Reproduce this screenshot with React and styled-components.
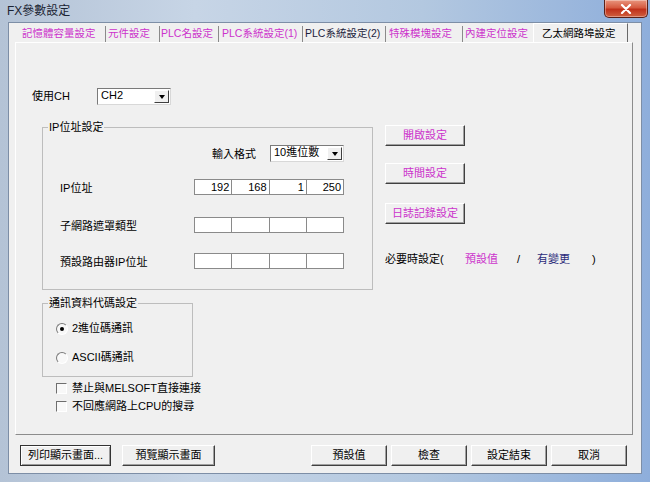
import styled, { createGlobalStyle } from "styled-components"

const GlobalStyle = createGlobalStyle`
  * { box-sizing: border-box; }
  html, body { margin: 0; padding: 0; background: #ffffff; }
  body {
    font-family: "Liberation Sans", "Noto Sans CJK TC", sans-serif;
    font-size: 11px;
    color: #000;
  }
`

const MAGENTA = "#cc33cc"

const Window = styled.div`
  width: 650px;
  height: 482px;
  display: flex;
  flex-direction: column;
  background: linear-gradient(90deg, #b4c3d6 0%, #c7d5e6 30%, #b3c8e0 65%, #8eaedb 100%);
`

const TitleBar = styled.div`
  height: 22px;
  flex: none;
  display: flex;
  justify-content: space-between;
  align-items: flex-start;
  padding-left: 7px;
`

const Title = styled.div`
  font-size: 12px;
  line-height: 22px;
  color: #1b2433;
`

const CloseButton = styled.div`
  width: 44px;
  height: 18px;
  margin-right: 2px;
  border: 1px solid #5a2018;
  border-top: none;
  border-radius: 0 0 5px 5px;
  background: linear-gradient(#e9957e 0%, #d65a40 45%, #c0301a 55%, #d0603f 100%);
  box-shadow: inset 0 0 0 1px rgba(255, 255, 255, 0.35);
  display: flex;
  align-items: center;
  justify-content: center;
`

const FrameBody = styled.div`
  flex: 1;
  display: flex;
  padding: 0 8px 8px 8px;
`

const Client = styled.div`
  flex: 1;
  display: flex;
  flex-direction: column;
  background: #f0f0f0;
  border: 1px solid #7d8ea6;
`

const TabStrip = styled.div`
  height: 19px;
  flex: none;
  display: flex;
  align-items: flex-end;
  padding-left: 7px;
`

const Tab = styled.div`
  width: ${(p) => p.$w}px;
  height: ${(p) => (p.$active ? 19 : 16)}px;
  padding-left: ${(p) => p.$pl}px;
  line-height: ${(p) => (p.$active ? 18 : 14)}px;
  font-size: 10.5px;
  white-space: nowrap;
  color: ${(p) => p.$color};
  border-right: 1px solid ${(p) => (p.$sep ? "#8a8a8a" : "transparent")};
  ${(p) =>
    p.$active &&
    `
    background: #f0f0f0;
    border-top: 1px solid #ffffff;
    border-left: 1px solid #ffffff;
    border-right: 1px solid #696969;
  `}
`

const Panel = styled.div`
  height: 393px;
  flex: none;
  margin: 0 8px 0 6px;
  padding-left: 16px;
  border: 1px solid;
  border-color: #ffffff #8c8c8c #8c8c8c #ffffff;
`

const ChRow = styled.div`
  margin-top: 45px;
  height: 17px;
  display: flex;
  align-items: center;
`

const Label = styled.span`
  width: ${(p) => (p.$w ? `${p.$w}px` : "auto")};
  flex: ${(p) => (p.$grow ? 1 : "none")};
  line-height: 13px;
  margin-top: ${(p) => p.$dy || 0}px;
  color: ${(p) => p.$color || "#000"};
  white-space: nowrap;
`

const Combo = styled.div`
  width: ${(p) => p.$w}px;
  height: 17px;
  display: flex;
  align-items: flex-end;
  background: #ffffff;
  border: 1px solid;
  border-color: #7a7a7a #d8d8d8 #d8d8d8 #7a7a7a;
  padding: 0 1px 1px 3px;
`

const ComboText = styled.span`
  flex: 1;
  align-self: flex-start;
  line-height: 13px;
`

const DropButton = styled.div`
  width: 15px;
  height: 13px;
  background: #f0f0f0;
  border: 1px solid;
  border-color: #ffffff #404040 #404040 #ffffff;
  display: flex;
  align-items: center;
  justify-content: center;

  &::after {
    content: "";
    border-left: 3.5px solid transparent;
    border-right: 3.5px solid transparent;
    border-top: 4px solid #000;
  }
`

const Columns = styled.div`
  margin-top: 16px;
  margin-left: 10px;
  display: flex;
  align-items: flex-start;
`

const LeftCol = styled.div`
  width: 331px;
  display: flex;
  flex-direction: column;
`

const Group = styled.fieldset`
  width: ${(p) => p.$w}px;
  height: ${(p) => p.$h}px;
  margin: ${(p) => p.$mt || 0}px 0 0 0;
  padding: 0;
  border: 1px solid #bdbdbd;
  min-inline-size: 0;
`

const Legend = styled.legend`
  padding: 0 1px;
  margin-left: 5px;
  line-height: 12px;
  font-size: 11px;
`

const GroupBody = styled.div`
  padding: 0 ${(p) => p.$pr || 0}px 0 ${(p) => p.$pl}px;
`

const FormatRow = styled.div`
  margin-top: 12px;
  height: 17px;
  display: flex;
  justify-content: flex-end;
  align-items: center;
`

const FieldRow = styled.div`
  margin-top: ${(p) => p.$mt}px;
  height: 16px;
  display: flex;
  align-items: center;
`

const IpField = styled.div`
  width: 150px;
  height: 16px;
  display: flex;
  background: #ffffff;
  border: 1px solid #8a8a8a;
`

const IpCell = styled.div`
  flex: 1;
  text-align: right;
  padding-right: 2px;
  line-height: 14px;

  & + & {
    border-left: 1px solid #8a8a8a;
  }
`

const OptionRow = styled.div`
  margin-top: ${(p) => p.$mt}px;
  margin-left: ${(p) => p.$ml || 0}px;
  height: 13px;
  display: flex;
  align-items: center;
  gap: ${(p) => p.$gap}px;
`

const RadioMark = styled.span`
  width: 12px;
  height: 12px;
  flex: none;
  border-radius: 50%;
  border: 1px solid;
  border-color: #7a7a7a #ffffff #ffffff #7a7a7a;
  background: #f8f8f8;
  display: flex;
  align-items: center;
  justify-content: center;

  &::after {
    content: "";
    width: 4px;
    height: 4px;
    border-radius: 50%;
    background: ${(p) => (p.$on ? "#000" : "transparent")};
  }
`

const CheckMark = styled.span`
  width: 11px;
  height: 11px;
  flex: none;
  border: 1px solid;
  border-color: #6e6e6e #ffffff #ffffff #6e6e6e;
  background: #f8f8f8;
`

const RightCol = styled.div`
  margin-left: 12px;
  margin-top: 4px;
  display: flex;
  flex-direction: column;
  align-items: flex-start;
`

const Button = styled.button`
  width: ${(p) => p.$w}px;
  height: 21px;
  flex: none;
  margin-top: ${(p) => p.$mt || 0}px;
  padding: 0;
  font: inherit;
  font-size: 11px;
  line-height: 13px;
  color: ${(p) => p.$color || "#000"};
  background: #f0f0f0;
  border: 1px solid;
  border-color: ${(p) => (p.$default ? "#333333" : "#ffffff #404040 #404040 #ffffff")};
  box-shadow: ${(p) =>
    p.$default
      ? "inset 1px 1px 0 #ffffff, inset -1px -1px 0 #9a9a9a"
      : "inset -1px -1px 0 #a0a0a0"};
`

const NoteRow = styled.div`
  margin-top: 29px;
  height: 13px;
  display: flex;
  align-items: center;
`

const Footer = styled.div`
  margin-top: 10px;
  padding: 0 14px 0 11px;
  display: flex;
  align-items: center;
`

const ButtonGroup = styled.div`
  display: flex;
  gap: ${(p) => p.$gap}px;
`

const Spacer = styled.div`
  flex: 1;
`

const tabs = [
  { label: "記憶體容量設定", w: 90, pl: 6, color: MAGENTA, sep: true },
  { label: "元件設定", w: 54, pl: 2, color: MAGENTA, sep: true },
  { label: "PLC名設定", w: 59, pl: 1, color: MAGENTA, sep: true },
  { label: "PLC系統設定(1)", w: 84, pl: 3, color: MAGENTA, sep: true },
  { label: "PLC系統設定(2)", w: 83, pl: 2, color: "#1c1c3c", sep: true },
  { label: "特殊模塊設定", w: 77, pl: 3, color: MAGENTA, sep: true },
  { label: "內建定位設定", w: 70, pl: 2, color: MAGENTA, sep: false },
  { label: "乙太網路埠設定", w: 95, pl: 8, color: "#000", active: true },
]

const ipRows = [
  { label: "IP位址", mt: 17, values: ["192", "168", "1", "250"] },
  { label: "子網路遮罩類型", mt: 22, values: ["", "", "", ""] },
  { label: "預設路由器IP位址", mt: 20, values: ["", "", "", ""] },
]

const App = () => {
  return (
    <Window>
      <GlobalStyle />
      <TitleBar>
        <Title>FX參數設定</Title>
        <CloseButton>
          <svg width="12" height="10" viewBox="0 0 12 10">
            <path d="M2 1 L10 9 M10 1 L2 9" stroke="#ffffff" strokeWidth="2.2" strokeLinecap="round" />
          </svg>
        </CloseButton>
      </TitleBar>
      <FrameBody>
        <Client>
          <TabStrip>
            {tabs.map((t) => (
              <Tab key={t.label} $w={t.w} $pl={t.pl} $color={t.color} $sep={t.sep} $active={t.active}>
                {t.label}
              </Tab>
            ))}
          </TabStrip>
          <Panel>
            <ChRow>
              <Label $w={65}>使用CH</Label>
              <Combo $w={74}>
                <ComboText>CH2</ComboText>
                <DropButton />
              </Combo>
            </ChRow>
            <Columns>
              <LeftCol>
                <Group $w={331} $h={169}>
                  <Legend>IP位址設定</Legend>
                  <GroupBody $pl={17} $pr={28}>
                    <FormatRow>
                      <Label $w={58} $dy={2}>輸入格式</Label>
                      <Combo $w={74}>
                        <ComboText>10進位數</ComboText>
                        <DropButton />
                      </Combo>
                    </FormatRow>
                    {ipRows.map((r) => (
                      <FieldRow key={r.label} $mt={r.mt}>
                        <Label $grow $dy={2}>{r.label}</Label>
                        <IpField>
                          {r.values.map((v, i) => (
                            <IpCell key={i}>{v}</IpCell>
                          ))}
                        </IpField>
                      </FieldRow>
                    ))}
                  </GroupBody>
                </Group>
                <Group $w={151} $h={80} $mt={7}>
                  <Legend>通訊資料代碼設定</Legend>
                  <GroupBody $pl={13}>
                    <OptionRow $mt={13} $gap={4}>
                      <RadioMark $on />
                      <Label>2進位碼通訊</Label>
                    </OptionRow>
                    <OptionRow $mt={16} $gap={4}>
                      <RadioMark />
                      <Label>ASCII碼通訊</Label>
                    </OptionRow>
                  </GroupBody>
                </Group>
                <OptionRow $mt={5} $ml={14} $gap={5}>
                  <CheckMark />
                  <Label>禁止與MELSOFT直接連接</Label>
                </OptionRow>
                <OptionRow $mt={5} $ml={14} $gap={5}>
                  <CheckMark />
                  <Label>不回應網路上CPU的搜尋</Label>
                </OptionRow>
              </LeftCol>
              <RightCol>
                <Button $w={80} $color={MAGENTA}>開啟設定</Button>
                <Button $w={80} $mt={17} $color={MAGENTA}>時間設定</Button>
                <Button $w={80} $mt={19} $color={MAGENTA}>日誌記錄設定</Button>
                <NoteRow>
                  <Label $w={80}>必要時設定(</Label>
                  <Label $w={52} $color={MAGENTA}>預設值</Label>
                  <Label $w={20}>/</Label>
                  <Label $w={55} $color="#2b2b7a">有變更</Label>
                  <Label>)</Label>
                </NoteRow>
              </RightCol>
            </Columns>
          </Panel>
          <Footer>
            <ButtonGroup $gap={11}>
              <Button $w={91} $default>列印顯示畫面...</Button>
              <Button $w={93}>預覽顯示畫面</Button>
            </ButtonGroup>
            <Spacer />
            <ButtonGroup $gap={4}>
              <Button $w={76}>預設值</Button>
              <Button $w={76}>檢查</Button>
              <Button $w={76}>設定結束</Button>
              <Button $w={76}>取消</Button>
            </ButtonGroup>
          </Footer>
        </Client>
      </FrameBody>
    </Window>
  )
}

export default App
